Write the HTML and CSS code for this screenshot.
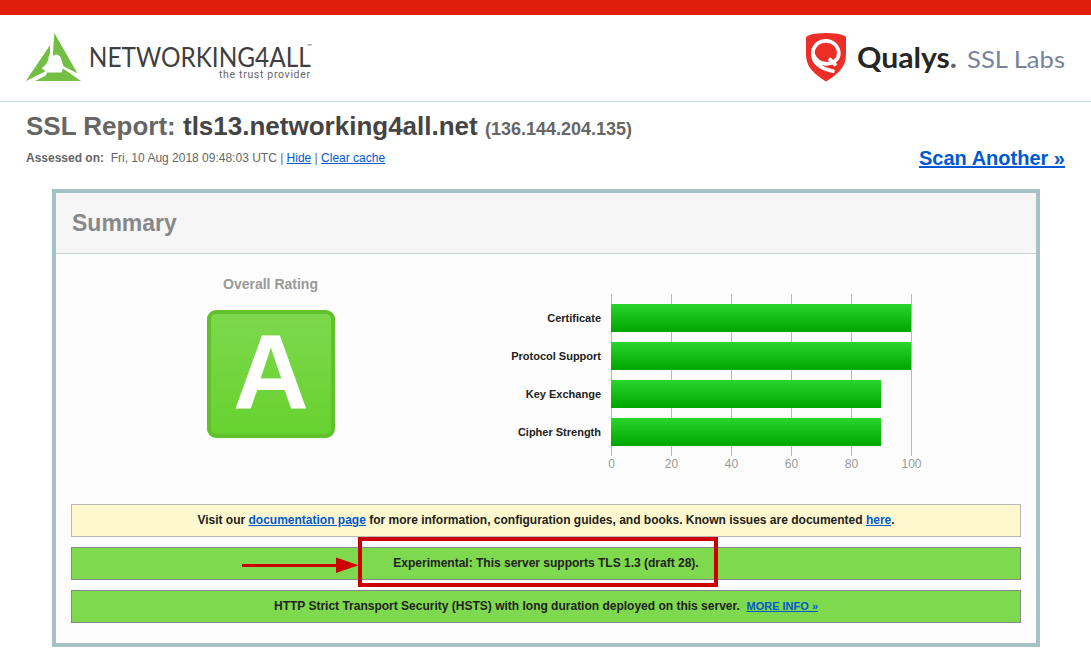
FILE: index.html
```html
<!DOCTYPE html>
<html lang="en">
<head>
<meta charset="utf-8">
<title>SSL Report: tls13.networking4all.net</title>
<link rel="stylesheet" href="styles.css">
</head>
<body>
<header class="header">
  <svg class="brand" width="290" height="56" viewBox="24 30 290 56">
    <g fill="#72bf44">
      <path d="M50 45 C43 56 33 70 26 81 L45.600 71.300 L41.700 68.300 C46 65 48.500 61.500 48.700 56.500 L50 53.500 Z"/>
      <path d="M54.300 33 L77.500 73.600 L63.500 66.300 C61.800 63.500 62.300 60 59.800 56 L56.500 54.300 L52.800 56 Z"/>
      <path d="M35 81 L46 75.500 L47 72.600 L61.500 72.600 L63 68.600 L81 81 Z"/>
    </g>
    <text class="brand-name" x="88.800" y="67" textLength="222" lengthAdjust="spacingAndGlyphs">NETWORKING4ALL</text>
    <text class="brand-tm" x="307" y="48">™</text>
    <text class="brand-tag" x="219" y="78.300" textLength="91" lengthAdjust="spacing">the trust provider</text>
  </svg>
  <svg class="qualys" width="264" height="56" viewBox="804 30 264 56">
    <path fill="#ed2e26" d="M806 37.500 Q808 33.300 826 33 Q844 33.300 846 37.500 V54 C846 67 839 73 826 81.500 C813 73 806 67 806 54 Z"/>
    <path fill="none" stroke="#fff" stroke-width="3.700" d="M834.500 71.500 C821 69 812.800 63 812.800 53.500 C812.800 46 818.500 40.800 826 40.800 C833 40.800 838.800 46.500 838.800 53.500 C838.800 59 833.500 63.800 826.500 63.800 C820 63.800 815 59.500 813 54 M829 58.500 L836 65.500"/>
    <text class="qualys-name" x="857" y="68" textLength="100" lengthAdjust="spacingAndGlyphs">Qualys<tspan class="qualys-dot">.</tspan></text>
    <text class="qualys-labs" x="967" y="68" textLength="98" lengthAdjust="spacingAndGlyphs">SSL Labs</text>
  </svg>
</header>
<main>
  <section class="report">
    <div>
      <h1 class="title">SSL Report: <span class="host">tls13.networking4all.net</span> <span class="ip">(136.144.204.135)</span></h1>
      <p class="assessed"><b>Assessed on:</b>&nbsp; Fri, 10 Aug 2018 09:48:03 UTC | <a href="#">Hide</a> | <a href="#">Clear cache</a></p>
    </div>
    <a class="scan" href="#">Scan Another »</a>
  </section>
  <section class="panel">
    <h2 class="panel-title">Summary</h2>
    <div class="overview">
      <div class="rating">
        <div class="rating-title">Overall Rating</div>
        <div class="grade">A</div>
      </div>
      <div class="chart">
        <div class="labels"><span>Certificate</span><span>Protocol Support</span><span>Key Exchange</span><span>Cipher Strength</span></div>
        <div>
          <div class="plot">
            <div class="bar full"></div><div class="bar full"></div><div class="bar ninety"></div><div class="bar ninety"></div>
          </div>
          <div class="axis"><span>0</span><span>20</span><span>40</span><span>60</span><span>80</span><span>100</span></div>
        </div>
      </div>
    </div>
    <div class="notices">
      <div class="notice info">Visit our <a href="#">documentation page</a> for more information, configuration guides, and books. Known issues are documented <a href="#">here</a>.</div>
      <div class="notice good">Experimental: This server supports TLS 1.3 (draft 28).
        <div class="highlight"></div>
        <svg class="arrow" width="118" height="18" viewBox="0 0 118 18"><path fill="#c00" d="M1 8h94V1.500L117.500 9.300 95 17v-6H1z"/></svg>
      </div>
      <div class="notice good">HTTP Strict Transport Security (HSTS) with long duration deployed on this server.&nbsp; <a class="more" href="#">MORE INFO »</a></div>
    </div>
  </section>
</main>
</body>
</html>
```
FILE: styles.css
```css
* { box-sizing: border-box; }
body { margin: 0; background: #fff; color: #222; font: 12px/15px "Liberation Sans", Arial, sans-serif; }
a { color: #0059d1; }
h1, h2, p { margin: 0; }
.header { height: 102px; border-top: 15px solid #df1e0c; border-bottom: 1px solid #bfd3d8; padding: 15px 23px 0 24px; display: flex; justify-content: space-between; align-items: flex-start; }
.brand-name { font: 27px Lato, sans-serif; fill: #3f3f41; }
.brand-tm { font: 6px Lato, sans-serif; fill: #555; }
.brand-tag { font: 10.5px Roboto, sans-serif; fill: #666; }
.qualys-name { font: 700 29px Lato, sans-serif; fill: #262626; }
.qualys-dot { fill: #666; }
.qualys-labs { font: 23px Lato, sans-serif; fill: #76839b; }
.report { height: 87px; padding: 9px 26px 0 26px; display: flex; justify-content: space-between; }
.title { font-size: 26px; line-height: 30px; color: #666; white-space: nowrap; }
.host { color: #444; }
.ip { font-size: 18px; }
.assessed { margin-top: 7px; color: #666; }
.scan { margin-top: 35px; font-size: 20px; line-height: 24px; font-weight: 700; }
.panel { width: 988px; height: 458px; margin-left: 52px; border: 4px solid #a7c2c5; background: #fdfdfd; }
.panel-title { height: 61px; padding-left: 16px; background: #f6f6f6; border-bottom: 1px solid #c5d3d3; color: #888; font-size: 23px; line-height: 60px; }
.overview { height: 250px; display: flex; }
.rating { width: 429px; padding-top: 22px; display: flex; flex-direction: column; align-items: center; }
.rating-title { color: #999; font-size: 14px; line-height: 17px; font-weight: 700; }
.grade { width: 128px; height: 128px; margin: 17px 0 0 1px; border: 4px solid #60c12c; border-radius: 9px; background: linear-gradient(#7ed84d, #67d22f); color: #fff; font-size: 105px; line-height: 118px; font-weight: 700; text-align: center; }
.chart { display: flex; padding-top: 40px; }
.labels { width: 116px; padding-top: 10px; display: flex; flex-direction: column; gap: 10px; text-align: right; font-size: 11px; font-weight: 700; line-height: 28px; white-space: nowrap; }
.plot { width: 301px; height: 162px; margin-left: 10px; padding-top: 10px; display: flex; flex-direction: column; gap: 10px; background: repeating-linear-gradient(90deg, #b8b8b8 0 1px, transparent 1px 60px); }
.bar { height: 28px; background: linear-gradient(#29d52b, #00a600); }
.full { width: 300px; }
.ninety { width: 270px; }
.axis { width: 360px; margin-left: -19.5px; display: flex; color: #999; line-height: 16px; }
.axis span { flex: 1; text-align: center; }
.notices { padding: 0 15px; display: flex; flex-direction: column; gap: 10px; }
.notice { position: relative; height: 33px; border: 1px solid #b8b8b8; text-align: center; font-weight: 700; line-height: 31px; white-space: nowrap; }
.info { background: #fff8ce; }
.good { background: #7ed94e; border-color: #888; }
.more { font-size: 11px; }
.highlight { position: absolute; left: 286px; top: -11px; width: 360px; height: 50px; border: 4px solid #c00; }
.arrow { position: absolute; left: 169px; top: 8px; }
```
